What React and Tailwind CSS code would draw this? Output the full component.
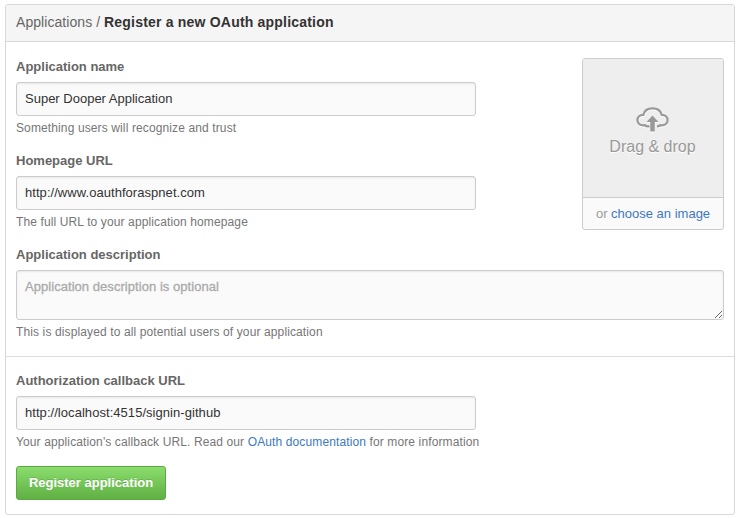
import React from "react";

const inputClass =
  "block h-[34px] w-[460px] rounded-[3px] border border-[#ccc] bg-[#fafafa] px-2 pb-px text-[13px] text-[#333] shadow-[inset_0_1px_2px_rgba(0,0,0,0.075)] outline-none";

function Field({ label, note, children }) {
  return (
    <div>
      <label className="mb-1.5 block h-[18px] text-[13px] leading-[18px] font-bold text-[#666]">{label}</label>
      {children}
      <p className="mt-[3px] h-[18px] text-[12px] leading-[18px] tracking-[0.12px] whitespace-nowrap text-[#767676]">
        {note}
      </p>
    </div>
  );
}

function CloudUpload() {
  return (
    <svg width="34" height="26" viewBox="0 0 34 26" fill="none" className="block drop-shadow-[0_1px_0_#fff]">
      <path
        d="M13.500 19.300H11.800c-1.200 0-2.200-.4-3-1.200C4.700 19 1.400 16.800 1.400 13.200 1.400 10 3.800 7.800 7.300 7.800 8.300 3.600 12 1.300 16.500 1.300s8.200 2.300 9.200 6.500c3.500 0 5.900 2.200 5.900 5.400 0 3.600-3.300 5.800-7.400 4.900-.8.800-1.800 1.200-3.200 1.200"
        stroke="#999"
        strokeWidth="2.2"
      />
      <path d="M16.500 8.500l6 6.500h-3.750V24.500h-4.500V15h-3.750z" fill="#999" />
    </svg>
  );
}

export default function App() {
  return (
    <div className="h-[518px] w-[738px] bg-white pt-1 pr-[3px] pl-[5px] font-['Liberation_Sans',Arial,sans-serif]">
      <div className="h-[511px] overflow-hidden rounded-[3px] border border-[#d8d8d8]">
        <h1 className="flex h-[37px] items-center border-b border-[#d8d8d8] bg-[#f5f5f5] px-2.5 pb-0.5 text-[14px] whitespace-pre text-[#666]">
          <span className="tracking-[0.06px]">Applications / </span>
          <strong className="tracking-[0.2px] text-[#333]">Register a new OAuth application</strong>
        </h1>
        <form onSubmit={(e) => e.preventDefault()}>
          <section className="flex flex-col gap-[15px] border-b border-[#ddd] px-2.5 pt-4 pb-[15px]">
            <div className="flex justify-between">
              <div className="flex flex-col gap-[15px]">
                <Field label="Application name" note="Something users will recognize and trust">
                  <input className={inputClass} defaultValue="Super Dooper Application" />
                </Field>
                <Field label="Homepage URL" note="The full URL to your application homepage">
                  <input className={`${inputClass} tracking-[0.05px]`} defaultValue="http://www.oauthforaspnet.com" />
                </Field>
              </div>
              <div className="flex h-[172px] w-[142px] flex-col overflow-hidden rounded-[3px] border border-[#ccc] bg-[#fafafa]">
                <div className="flex h-[139px] flex-col items-center border-b border-[#ccc] bg-[#eee] pt-12 pr-px text-[16px] text-[#999] [text-shadow:0_1px_0_#fff]">
                  <CloudUpload />
                  <span className="mt-[3px] leading-[22px]">Drag &amp; drop</span>
                </div>
                <div className="flex flex-1 items-center justify-center text-[13px] whitespace-pre text-[#999]">
                  or <a className="text-[#4078c0]">choose an image</a>
                </div>
              </div>
            </div>
            <Field label="Application description" note="This is displayed to all potential users of your application">
              <textarea
                placeholder="Application description is optional"
                className="block h-[50px] w-[708px] rounded-[3px] border border-[#ccc] bg-[#fafafa] px-2 py-[7px] text-[13px] leading-[18px] tracking-[0.05px] shadow-[inset_0_1px_2px_rgba(0,0,0,0.075)] outline-none placeholder:text-[#aaa] placeholder:[-webkit-text-stroke:0.3px_#aaa]"
              />
            </Field>
          </section>
          <section className="flex flex-col items-start gap-[15px] px-2.5 pt-[15px]">
            <Field
              label="Authorization callback URL"
              note={
                <>
                  Your application's callback URL. Read our <a className="text-[#4078c0]">OAuth documentation</a> for more
                  information
                </>
              }
            >
              <input className={`${inputClass} tracking-[0.05px]`} defaultValue="http://localhost:4515/signin-github" />
            </Field>
            <button className="h-[34px] w-[150px] rounded-[3px] border border-[#5ca941] bg-linear-to-b from-[#8add6d] to-[#60b044] text-[13px] font-bold text-white [text-shadow:0_-1px_0_rgba(0,0,0,0.15)]">
              Register application
            </button>
          </section>
        </form>
      </div>
    </div>
  );
}
